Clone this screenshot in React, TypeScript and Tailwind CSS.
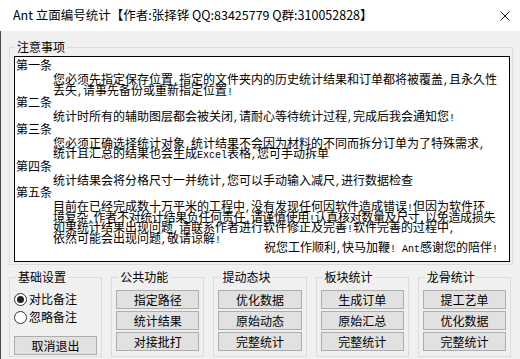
import React from 'react';

const cjk = "[font-family:'Noto_Sans_CJK_SC',sans-serif]";

const sections = [
  {
    label: '第一条',
    lines: [
      '您必须先指定保存位置,指定的文件夹内的历史统计结果和订单都将被覆盖,且永久性',
      '丢失,请事先备份或重新指定位置!',
    ],
  },
  {
    label: '第二条',
    lines: ['统计时所有的辅助图层都会被关闭,请耐心等待统计过程,完成后我会通知您!'],
  },
  {
    label: '第三条',
    lines: [
      '您必须正确选择统计对象,统计结果不会因为材料的不同而拆分订单为了特殊需求,',
      '统计且汇总的结果也会生成Excel表格,您可手动拆单',
    ],
  },
  {
    label: '第四条',
    lines: ['统计结果会将分格尺寸一并统计,您可以手动输入减尺,进行数据检查'],
  },
  {
    label: '第五条',
    lines: [
      '目前在已经完成数十万平米的工程中,没有发现任何因软件造成错误!但因为软件环',
      '境复杂,作者不对统计结果负任何责任,请谨慎使用!认真核对数量及尺寸,以免造成损失',
      '如果统计结果出现问题,请联系作者进行软件修正及完善!软件完善的过程中,',
      '依然可能会出现问题,敬请谅解!',
    ],
  },
];

const groups = [
  { title: '公共功能', buttons: ['指定路径', '统计结果', '对接批打'] },
  { title: '提动态块', buttons: ['优化数据', '原始动态', '完整统计'] },
  { title: '板块统计', buttons: ['生成订单', '原始汇总', '完整统计'] },
  { title: '龙骨统计', buttons: ['提工艺单', '优化数据', '完整统计'] },
];

// half-width runs get a 6px-advance mono face, like the old bitmap font
function Mixed({ text }: { text: string }) {
  return (
    <>
      {text.split(/([\x20-\x7e]+)/).map((part, i) =>
        i % 2 ? (
          <span key={i} className="text-[10px] leading-[0px] [font-family:'Liberation_Mono',monospace]">
            {part}
          </span>
        ) : (
          part
        )
      )}
    </>
  );
}

function Btn({ label }: { label: string }) {
  return (
    <button
      type="button"
      className={`h-[19px] w-full bg-[#e1e1e1] border border-[#adadad] text-[12px] leading-[17px] text-black ${cjk}`}
    >
      {label}
    </button>
  );
}

function Radio({ label, checked }: { label: string; checked?: boolean }) {
  return (
    <div className="h-[18px] flex items-center gap-[2px]">
      <span className="w-[13px] h-[13px] rounded-full border border-[#333] bg-white flex items-center justify-center">
        {checked && <span className="w-[7px] h-[7px] rounded-full bg-[#222]" />}
      </span>
      <span className="text-[12px] leading-[14px] text-black">{label}</span>
    </div>
  );
}

function Group({ title, children }: { title: string; children: React.ReactNode }) {
  return (
    <fieldset className="border border-[#dcdcdc] px-[4px] pt-[6px] min-w-0">
      <legend className="ml-[2px] px-[2px] text-[12px] leading-[14px] text-black">{title}</legend>
      {children}
    </fieldset>
  );
}

export default function App() {
  return (
    <div className={`w-[520px] h-[359px] flex flex-col overflow-hidden ${cjk}`}>
      <div className="h-[31px] shrink-0 bg-white flex items-center pl-[13px] pr-[10px]">
        <span className="text-[12.5px] text-black whitespace-nowrap">
          Ant 立面编号统计【作者:张择铧 QQ:83425779 Q群:310052828】
        </span>
        <svg className="ml-auto" width="10" height="10" viewBox="0 0 10 10">
          <path d="M0.5 0.5L9.5 9.5M9.5 0.5L0.5 9.5" stroke="#111" strokeWidth="1" fill="none" />
        </svg>
      </div>

      <div className="flex-1 bg-[#f0f0f0] border-l border-[#4a4a4a] flex flex-col">
        <fieldset className="mt-[9px] ml-[8px] mr-[7px] border border-[#dcdcdc] pl-[4px] pr-[2px] pt-[2px] pb-[2px] min-w-0">
          <legend className="ml-px px-[2px] text-[12px] leading-[14px] text-black">注意事项</legend>
          <div className="h-[206px] bg-white border border-black pl-px pt-px overflow-hidden text-black">
            {sections.map(s => (
              <div key={s.label}>
                <div className="h-[14px] text-[12px] leading-[14px]">{s.label}</div>
                <div className="pt-[2px] pl-[37px] text-[12px] leading-[10.5px]">
                  {s.lines.map(l => (
                    <div
                      key={l}
                      className={`h-[10.5px] whitespace-nowrap ${l.startsWith('境复杂') ? 'tracking-[-0.35px]' : ''}`}
                    >
                      <Mixed text={l} />
                    </div>
                  ))}
                </div>
              </div>
            ))}
            <div className="h-[10.5px] -mt-[1px] pr-[11px] text-right text-[12px] leading-[10.5px] whitespace-nowrap">
              <Mixed text="祝您工作顺利,快马加鞭! Ant感谢您的陪伴!" />
            </div>
          </div>
        </fieldset>

        <div className="mt-[5px] ml-[8px] mr-[9px] grid grid-cols-5 gap-[9px]">
          <Group title="基础设置">
            <Radio label="对比备注" checked />
            <Radio label="忽略备注" />
            <div className="mt-[6px]">
              <Btn label="取消退出" />
            </div>
          </Group>
          {groups.map(g => (
            <Group key={g.title} title={g.title}>
              <div className="flex flex-col gap-[2px]">
                {g.buttons.map(b => (
                  <Btn key={b} label={b} />
                ))}
              </div>
            </Group>
          ))}
        </div>
      </div>
    </div>
  );
}
